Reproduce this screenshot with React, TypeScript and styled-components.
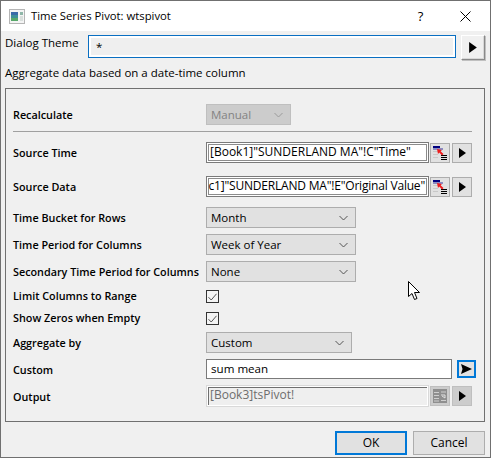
import React from 'react'
import styled, { createGlobalStyle } from 'styled-components'

const GlobalStyle = createGlobalStyle`
  html, body {
    margin: 0;
    padding: 0;
    background: #f0f0f0;
  }
  * {
    box-sizing: border-box;
  }
`

const Window = styled.div`
  position: relative;
  width: 491px;
  height: 458px;
  display: flex;
  flex-direction: column;
  background: #f0f0f0;
  border: 1px solid #707070;
  font-family: 'Open Sans', 'Noto Sans', sans-serif;
  font-size: 11.5px;
  color: #000;
  overflow: hidden;
`

const TitleBar = styled.div`
  height: 30px;
  flex: none;
  display: flex;
  align-items: center;
  padding: 0 2px 0 8px;
  background: #fff;
`

const TitleText = styled.div`
  flex: 1;
  margin-left: 6px;
  font-size: 11.3px;
  padding-bottom: 1px;
`

const TitleAction = styled.div`
  width: 45px;
  height: 30px;
  display: flex;
  align-items: center;
  justify-content: center;
  font-size: 13px;
`

const ThemeRow = styled.div`
  display: flex;
  align-items: flex-start;
  margin-top: 4px;
  padding-left: 4px;
`

const ThemeLabel = styled.div`
  width: 83px;
  line-height: 15px;
`

const ThemeField = styled.div`
  width: 368px;
  height: 23px;
  padding: 0 7px;
  line-height: 21px;
  background: #efefef;
  border: 1px solid #0a6fc2;
  box-shadow: inset 0 0 0 2px #fff;
`

const ThemeButton = styled.div`
  width: 24px;
  height: 25px;
  margin-left: 5px;
  display: flex;
  align-items: center;
  justify-content: center;
  background: #f0f0f0;
  border: 1px solid #fff;
  border-right-color: #8a8a8a;
  border-bottom-color: #8a8a8a;
  box-shadow: 1px 1px 0 #c0c0c0, inset -1px -1px 0 #d8d8d8;
`

const Description = styled.div`
  margin: 4px 0 0 4px;
  line-height: 17px;
`

const Group = styled.div`
  width: 480px;
  height: 334px;
  margin: 7px 0 0 4px;
  padding: 0 7px;
  border: 1px solid #707070;
`

const Row = styled.div<{ $top: number; $height?: number }>`
  display: grid;
  grid-template-columns: 193px 1fr;
  align-items: center;
  height: ${(p) => p.$height ?? 21}px;
  margin-top: ${(p) => p.$top}px;
`

const Label = styled.div`
  font-weight: 600;
  font-size: 10.8px;
  white-space: nowrap;
`

const Divider = styled.div`
  height: 1px;
  width: 459px;
  margin-top: 6px;
  background: #a0a0a0;
`

const Controls = styled.div`
  display: flex;
  align-items: center;
`

const Combo = styled.div<{ $width: number; $disabled?: boolean }>`
  width: ${(p) => p.$width}px;
  height: 21px;
  display: flex;
  align-items: center;
  justify-content: space-between;
  padding: 0 7px 0 4px;
  background: ${(p) => (p.$disabled ? '#cccccc' : '#e1e1e1')};
  border: 1px solid ${(p) => (p.$disabled ? '#bfbfbf' : '#adadad')};
  color: ${(p) => (p.$disabled ? '#838383' : '#000')};
`

const Chevron = styled.svg<{ $disabled?: boolean }>`
  width: 9px;
  height: 6px;
  fill: none;
  stroke: ${(p) => (p.$disabled ? '#9a9a9a' : '#555')};
  stroke-width: 1;
`

const RangeInput = styled.div<{ $disabled?: boolean }>`
  width: 223px;
  height: ${(p) => (p.$disabled ? 22 : 21)}px;
  padding: 0 3px;
  line-height: 18px;
  white-space: nowrap;
  overflow: hidden;
  background: ${(p) => (p.$disabled ? '#efefef' : '#fff')};
  border: 1px solid ${(p) => (p.$disabled ? '#d9d9d9' : '#7a7a7a')};
  color: ${(p) => (p.$disabled ? '#6d6d6d' : '#000')};
  box-shadow: ${(p) =>
    p.$disabled
      ? 'inset 0 0 0 1px #fff, inset 1px 1px 0 1px #6f6f6f'
      : 'inset 0 0 0 1px #fff, inset 0 0 0 2px #8c8c8c'};
  font-size: 12px;
`

const EndAligned = styled.div`
  display: flex;
  justify-content: flex-end;
  letter-spacing: -0.2px;
`

const PlainInput = styled.div`
  width: 246px;
  height: 20px;
  padding: 0 4px;
  line-height: 17px;
  background: #fff;
  border: 1px solid #7a7a7a;
  font-size: 11.6px;
`

const IconButton = styled.div<{ $gap: number; $disabled?: boolean }>`
  width: 20px;
  height: 20px;
  margin-left: ${(p) => p.$gap}px;
  display: flex;
  align-items: center;
  justify-content: center;
  background: ${(p) => (p.$disabled ? '#cccccc' : '#e1e1e1')};
  border: 1px solid ${(p) => (p.$disabled ? '#bfbfbf' : '#adadad')};
`

const FocusButton = styled.div`
  width: 19px;
  height: 18px;
  margin-left: 5px;
  display: flex;
  align-items: center;
  justify-content: center;
  background: #e1e1e1;
  border: 2px solid #0078d7;
`

const Check = styled.div`
  width: 13px;
  height: 13px;
  margin-top: 2px;
  display: flex;
  align-items: center;
  justify-content: center;
  background: #f4f4f4;
  border: 1px solid #333;
`

const Footer = styled.div`
  display: flex;
  justify-content: flex-end;
  gap: 6px;
  margin-top: 9px;
  padding-right: 5px;
`

const DialogButton = styled.div<{ $focus?: boolean }>`
  width: 72px;
  height: 24px;
  display: flex;
  align-items: center;
  justify-content: center;
  padding-bottom: 1px;
  background: #e1e1e1;
  border: ${(p) => (p.$focus ? '2px solid #0078d7' : '1px solid #adadad')};
  font-size: 12px;
`

const Cursor = styled.svg`
  position: absolute;
  left: 407px;
  top: 280px;
  width: 13px;
  height: 20px;
`

const Play = ({ size = 7, color = '#000' }: { size?: number; color?: string }) => (
  <svg width={size} height={size + 3} viewBox="0 0 7 10">
    <path d="M0 0 L7 5 L0 10 Z" fill={color} />
  </svg>
)

const WideArrow = () => (
  <svg width="11" height="10" viewBox="0 0 11 10">
    <path d="M0 0 L11 5 L0 10 L1.5 5 Z" fill="#000" />
  </svg>
)

const AppIcon = () => (
  <svg width="16" height="15" viewBox="0 0 16 15">
    <rect x="0.5" y="0.5" width="15" height="14" fill="#f4f4f4" stroke="#b5b5b5" />
    <rect x="2" y="3" width="7" height="9" fill="#3f8f98" />
    <rect x="2" y="3" width="7" height="3" fill="#3a6aa8" />
    <rect x="2" y="9" width="7" height="3" fill="#58a86a" />
    <rect x="11" y="3" width="3" height="3" fill="#8fb6a8" />
    <rect x="11" y="7" width="3" height="5" fill="#d9dfdc" />
  </svg>
)

const RangeIcon = () => (
  <svg width="14" height="14" viewBox="0 0 14 14">
    <rect x="0" y="0" width="7" height="2" fill="#00007f" />
    <rect x="0" y="2" width="10" height="2" fill="#8a8ac0" />
    <path d="M0 5.5h5M0 8.5h5M0 11.5h5" stroke="#c8c8c8" />
    <path d="M8 9.5h6M8 11.5h6M8 13.5h6" stroke="#000" />
    <path d="M4 3 L9 4 L7.6 5.2 L10.5 8 L9 9.5 L6.2 6.6 L5 8 Z" fill="#ee1c1c" />
  </svg>
)

const OutputIcon = () => (
  <svg width="14" height="14" viewBox="0 0 14 14">
    <rect x="0" y="0" width="14" height="14" fill="#8f8f8f" />
    <path d="M1 3.5h5M1 6.5h5M1 9.5h5M1 12h5M8 3h5M8 11.5h5" stroke="#cfcfcf" />
    <path d="M8 6 L12 6 L12 9 M12 9 L9 7" stroke="#e0e0e0" fill="none" />
  </svg>
)

const ChevronIcon = ({ disabled }: { disabled?: boolean }) => (
  <Chevron $disabled={disabled} viewBox="0 0 9 6">
    <path d="M0.5 1 L4.5 5 L8.5 1" />
  </Chevron>
)

const CheckMark = () => (
  <svg width="9" height="8" viewBox="0 0 9 8">
    <path d="M0.5 4.2 L3.2 7 L8.5 0.8" fill="none" stroke="#555" strokeWidth="1" />
  </svg>
)

const App: React.FC = () => (
  <>
    <GlobalStyle />
    <Window>
      <TitleBar>
        <AppIcon />
        <TitleText>Time Series Pivot: wtspivot</TitleText>
        <TitleAction>?</TitleAction>
        <TitleAction>
          <svg width="11" height="11" viewBox="0 0 11 11">
            <path d="M0.5 0.5 L10.5 10.5 M10.5 0.5 L0.5 10.5" stroke="#000" />
          </svg>
        </TitleAction>
      </TitleBar>

      <ThemeRow>
        <ThemeLabel>Dialog Theme</ThemeLabel>
        <ThemeField>*</ThemeField>
        <ThemeButton>
          <Play size={8} />
        </ThemeButton>
      </ThemeRow>

      <Description>Aggregate data based on a date-time column</Description>

      <Group>
        <Row $top={15}>
          <Label>Recalculate</Label>
          <Combo $width={85} $disabled>
            Manual
            <ChevronIcon disabled />
          </Combo>
        </Row>
        <Divider />
        <Row $top={10}>
          <Label>Source Time</Label>
          <Controls>
            <RangeInput>[Book1]"SUNDERLAND MA"!C"Time"</RangeInput>
            <IconButton $gap={1}>
              <RangeIcon />
            </IconButton>
            <IconButton $gap={2}>
              <Play />
            </IconButton>
          </Controls>
        </Row>
        <Row $top={13}>
          <Label>Source Data</Label>
          <Controls>
            <RangeInput>
              <EndAligned>
                <span>c1]"SUNDERLAND MA"!E"Original Value"</span>
              </EndAligned>
            </RangeInput>
            <IconButton $gap={1}>
              <RangeIcon />
            </IconButton>
            <IconButton $gap={2}>
              <Play />
            </IconButton>
          </Controls>
        </Row>
        <Row $top={10}>
          <Label>Time Bucket for Rows</Label>
          <Combo $width={150}>
            Month
            <ChevronIcon />
          </Combo>
        </Row>
        <Row $top={6}>
          <Label>Time Period for Columns</Label>
          <Combo $width={150}>
            Week of Year
            <ChevronIcon />
          </Combo>
        </Row>
        <Row $top={6}>
          <Label>Secondary Time Period for Columns</Label>
          <Combo $width={150}>
            None
            <ChevronIcon />
          </Combo>
        </Row>
        <Row $top={3}>
          <Label>Limit Columns to Range</Label>
          <Check>
            <CheckMark />
          </Check>
        </Row>
        <Row $top={1}>
          <Label>Show Zeros when Empty</Label>
          <Check>
            <CheckMark />
          </Check>
        </Row>
        <Row $top={4}>
          <Label>Aggregate by</Label>
          <Combo $width={146}>
            Custom
            <ChevronIcon />
          </Combo>
        </Row>
        <Row $top={6} $height={20}>
          <Label>Custom</Label>
          <Controls>
            <PlainInput>sum mean</PlainInput>
            <FocusButton>
              <WideArrow />
            </FocusButton>
          </Controls>
        </Row>
        <Row $top={6} $height={22}>
          <Label>Output</Label>
          <Controls>
            <RangeInput $disabled>[Book3]tsPivot!</RangeInput>
            <IconButton $gap={1} $disabled>
              <OutputIcon />
            </IconButton>
            <IconButton $gap={2} $disabled>
              <Play />
            </IconButton>
          </Controls>
        </Row>
      </Group>

      <Footer>
        <DialogButton $focus>OK</DialogButton>
        <DialogButton>Cancel</DialogButton>
      </Footer>

      <Cursor viewBox="0 0 13 20">
        <path
          d="M0.5 0.5 L0.5 15.5 L4 12.5 L6.5 18.5 L9 17.5 L6.5 11.5 L11.5 11.5 Z"
          fill="#fff"
          stroke="#000"
        />
      </Cursor>
    </Window>
  </>
)

export default App
